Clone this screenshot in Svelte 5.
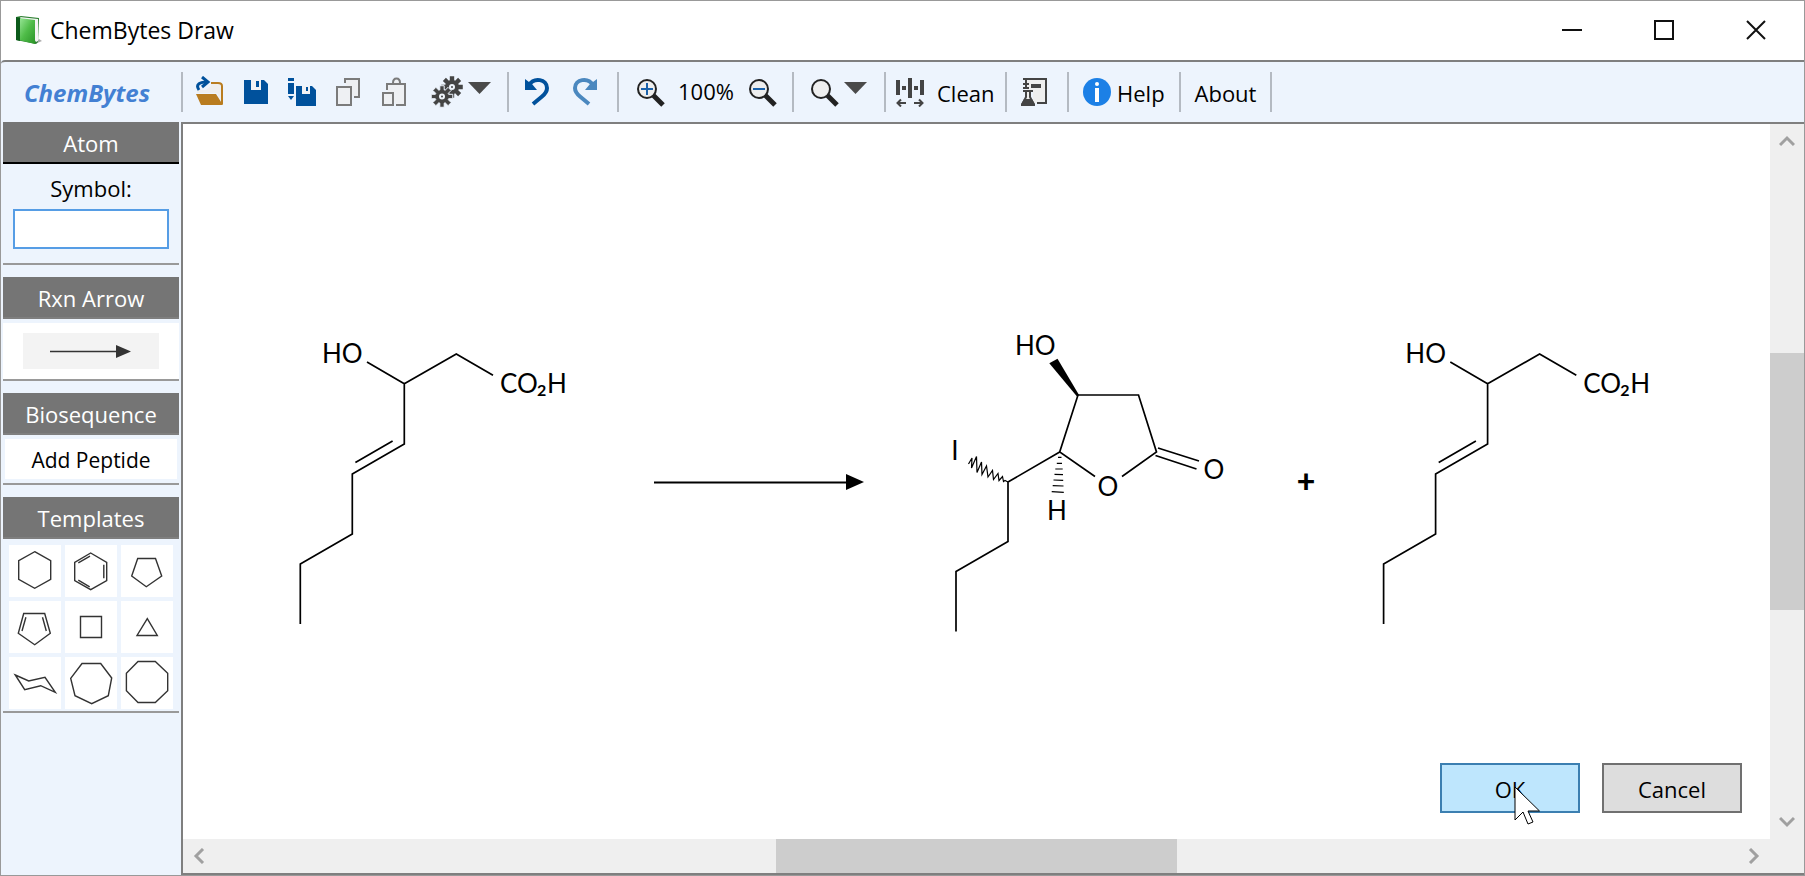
<script>
  let symbol = $state('');

  // Outline of a cog wheel with eight teeth, centred on (cx, cy).
  function cog(cx, cy, outer, inner) {
    const steps = [[-0.32, inner], [-0.2, outer], [0.2, outer], [0.32, inner]];
    const points = [];
    for (let tooth = 0; tooth < 8; tooth++) {
      for (const [offset, radius] of steps) {
        const angle = (tooth * Math.PI) / 4 + offset;
        points.push(`${(cx + radius * Math.cos(angle)).toFixed(2)},${(cy + radius * Math.sin(angle)).toFixed(2)}`);
      }
    }
    return points.join(' ');
  }

  const templates = [
    { name: 'Cyclohexane', d: 'M25.7 6.7 41.7 15.7V34.3L25.7 43.3 9.7 34.3V15.7Z' },
    { name: 'Benzene', d: 'M25.7 8 41.7 17.3V35.7L25.7 44.7 9.7 35.7V17.3ZM13.3 17.8 25 11.2M38.8 19.7V33.3M13.3 35.2 24.7 41.8' },
    { name: 'Cyclopentane', d: 'M16.7 13.5H34.5L40.7 31 25.3 41.7 10.7 31Z' },
    { name: 'Cyclopentadiene', d: 'M14.7 12.5H35.7L41.3 32.3 25.7 43.7 9.3 32.3ZM16.9 16.3 13 30M33.5 16.3 37.3 30' },
    { name: 'Cyclobutane', d: 'M15.5 15.5H36.5V36.5H15.5Z' },
    { name: 'Cyclopropane', d: 'M26.3 17.7 36.3 34.5H16Z' },
    { name: 'Chair', d: 'M6.3 18 19.7 24 36 20.3 46.3 35.3 31.7 28.7 15.7 32.7Z' },
    { name: 'Cycloheptane', d: 'M17 6.5H35.7L46.7 21 43.3 38.7 26.7 46.7 10 38.7 5.7 21.3Z' },
    { name: 'Cyclooctane', d: 'M17 4.5H34.3L46.7 16.3V33.7L34.3 45.5H17L5.4 33.7V16.3Z' }
  ];
</script>

{#snippet caret()}
  <svg width="24" height="32" viewBox="0 0 24 32"><path d="M0 6H23L11.5 18Z" fill="#4a4a4a" /></svg>
{/snippet}

{#snippet lens()}
  <path d="M17.5 17.5 27 27" stroke="#222" stroke-width="5" />
  <circle cx="11" cy="11" r="9" fill="#eee" stroke="#222" stroke-width="2" />
{/snippet}

{#snippet alkene(dx)}
  <g transform="translate({dx} 0)">
    <path class="bond" d="M367 362 404.3 383.7 456.3 354 493 375.3M404.3 383.7V444L352.3 474V534L300.3 564V624M392.6 441 355.4 462.4" />
    <text x="322" y="363">HO</text>
    <text x="500" y="393">CO</text>
    <text class="sub" x="537" y="396">2</text>
    <text x="547" y="393">H</text>
  </g>
{/snippet}

<div class="window">
  <header class="titlebar">
    <svg class="book" width="28" height="30" viewBox="0 0 28 30">
      <defs>
        <linearGradient id="cover" x1="0" y1="0" x2="1" y2="1">
          <stop offset="0" stop-color="#9be89a" />
          <stop offset="0.5" stop-color="#4fbc48" />
          <stop offset="1" stop-color="#2a9428" />
        </linearGradient>
      </defs>
      <path d="M20 28 27 25 24 23Z" fill="#777" opacity="0.6" />
      <path d="M1 1 6 0 24 2 23 26 21 28 1 24Z" fill="#2c8030" />
      <path d="M5 1 23 3V25L21 26Z" fill="#f4f4f4" />
      <path d="M4 2 20 4V28L4 24Z" fill="url(#cover)" />
      <path d="M1 1 5 2V25L1 24Z" fill="#0c5a1b" />
    </svg>
    <h1>ChemBytes Draw</h1>
    <div class="controls">
      <button aria-label="Minimize"><svg width="20" height="20" viewBox="0 0 20 20"><path d="M0 10H20" /></svg></button>
      <button aria-label="Maximize"><svg width="20" height="20" viewBox="0 0 20 20"><path d="M1 1H19V19H1Z" /></svg></button>
      <button aria-label="Close"><svg width="20" height="20" viewBox="0 0 20 20"><path d="M1 1 19 19M19 1 1 19" /></svg></button>
    </div>
  </header>

  <nav class="toolbar">
    <div class="brand">ChemBytes</div>

    <div class="group files">
      <button class="tool" aria-label="Open">
        <svg width="28" height="32" viewBox="0 0 28 32">
          <path d="M1 17V14H10L15 10V7H26V28L21 17Z" fill="#eee" />
          <path d="M15 7H22Q26 7 26 10V28" fill="none" stroke="#b97c1f" stroke-width="2" />
          <path d="M0 18H20L27 29H5Z" fill="#b97c1f" />
          <path d="M3 14C-1 8 4 6 12 6" fill="none" stroke="#00519c" stroke-width="3" />
          <path d="M6 1 12 6 6 11" fill="none" stroke="#00519c" stroke-width="3" />
        </svg>
      </button>
      <button class="tool" aria-label="Save">
        <svg width="24" height="32" viewBox="0 0 24 32">
          <path d="M0 4H20L24 8V28H0Z" fill="#00519c" />
          <path d="M7 4H17V14H7Z" fill="#f2f2f4" /><path d="M12 5H15V11H12Z" fill="#00519c" />
        </svg>
      </button>
      <button class="tool" aria-label="Save as">
        <svg width="28" height="32" viewBox="0 0 28 32">
          <path d="M0 2H6V5H0ZM0 7H6V18H0ZM0 20H6L3 24Z" fill="#00519c" />
          <path d="M8 10H24L28 14V30H8Z" fill="#00519c" />
          <path d="M14 10H22V18H14Z" fill="#f2f2f4" /><path d="M18 11H20V15H18Z" fill="#00519c" />
        </svg>
      </button>
      <button class="tool" aria-label="Copy">
        <svg width="24" height="32" viewBox="0 0 24 32" fill="#eef0f3" stroke="#7b7b7b" stroke-width="2">
          <path d="M9 7V3H23V21H18" /><path d="M1 11H15V29H1Z" />
        </svg>
      </button>
      <button class="tool" aria-label="Paste">
        <svg width="24" height="32" viewBox="0 0 24 32" fill="#eef0f3" stroke="#7b7b7b" stroke-width="2">
          <path d="M5 14V8H23V29H14" /><path d="M11 7C11 1 18 1 18 7" /><path d="M1 17H11V29H1Z" />
        </svg>
      </button>
      <button class="drop" aria-label="Settings">
        <svg width="32" height="32" viewBox="0 0 32 32">
          <polygon points={cog(21, 11, 11, 7)} fill="#444" />
          <circle cx="21" cy="11" r="3" fill="#eef3f9" /><circle cx="21" cy="11" r="1" fill="#444" />
          <polygon points={cog(11, 20.5, 11, 7)} fill="#444" stroke="#edf4fd" stroke-width="1" />
          <circle cx="11" cy="20.5" r="3" fill="#eef3f9" /><circle cx="11" cy="20.5" r="1" fill="#444" />
        </svg>
        {@render caret()}
      </button>
    </div>

    <div class="group history">
      <button class="tool" aria-label="Undo">
        <svg width="26" height="32" viewBox="0 0 26 32">
          <path d="M5 9C10 1 23 3 23 12 23 16 21 18 18 20.5L9 28" fill="none" stroke="#00519c" stroke-width="4" />
          <path d="M1 3 5 6 8 8 13 14H1Z" fill="#00519c" />
        </svg>
      </button>
      <button class="tool" aria-label="Redo">
        <svg width="26" height="32" viewBox="0 0 26 32">
          <path d="M21 9C16 1 3 3 3 12 3 16 5 18 8 20.5L17 28" fill="none" stroke="#4b88bf" stroke-width="4" />
          <path d="M25 3 21 6 18 8 13 14H25Z" fill="#4b88bf" />
        </svg>
      </button>
    </div>

    <div class="group zoom">
      <button class="tool" aria-label="Zoom in">
        <svg width="29" height="29" viewBox="0 0 29 29">
          {@render lens()}
          <path d="M5 11H17M11 5V17" stroke="#1b62ab" stroke-width="2" />
        </svg>
      </button>
      <output>100%</output>
      <button class="tool" aria-label="Zoom out">
        <svg width="29" height="29" viewBox="0 0 29 29">
          {@render lens()}
          <path d="M5 11H17" stroke="#1b62ab" stroke-width="2" />
        </svg>
      </button>
    </div>

    <div class="group">
      <button class="drop search" aria-label="Search">
        <svg width="29" height="29" viewBox="0 0 29 29">{@render lens()}</svg>
        {@render caret()}
      </button>
    </div>

    <div class="group">
      <button class="labelled clean">
        <svg width="28" height="30" viewBox="0 0 28 30" fill="#444">
          <path d="M0 3H4V18H0ZM12 1H16V21H12ZM24 3H28V18H24ZM6 9H10V13H6ZM18 9H22V13H18Z" />
          <path d="M1 26H10M27 26H18M5 22.5 1.5 26 5 29.5M23 22.5 26.5 26 23 29.5" fill="none" stroke="#444" stroke-width="2" />
        </svg>
        <span>Clean</span>
      </button>
    </div>

    <div class="group">
      <button class="tool wide" aria-label="Lab book">
        <svg width="28" height="30" viewBox="0 0 28 30">
          <path d="M6 3H26V26H12V13H6Z" fill="#eee" />
          <path d="M4 2H25V26H16M5 2V12M2 7H8M2 11H8M2 2H8" fill="none" stroke="#444" stroke-width="2" />
          <path d="M10 7H20V11H10Z" fill="#444" />
          <path d="M2 14H12M5 14V20L2 26H12L9 20V14" fill="#eee" stroke="#444" stroke-width="2" />
          <path d="M3 22H11L14 27V29H0V27Z" fill="#444" />
        </svg>
      </button>
    </div>

    <div class="group">
      <button class="labelled help">
        <svg width="28" height="28" viewBox="0 0 28 28">
          <circle cx="14" cy="14" r="14" fill="#1c80e6" />
          <circle cx="14" cy="6" r="2" fill="#fff" /><path d="M12 10H16V24H12Z" fill="#fff" />
        </svg>
        <span>Help</span>
      </button>
    </div>

    <div class="group last"><button class="labelled about"><span>About</span></button></div>
  </nav>

  <div class="body">
    <aside>
      <section>
        <h2 class="active">Atom</h2>
        <div class="symbol">
          <label for="symbol">Symbol:</label>
          <input id="symbol" type="text" bind:value={symbol} />
        </div>
      </section>
      <section>
        <h2>Rxn Arrow</h2>
        <div class="arrow">
          <button aria-label="Reaction arrow">
            <svg width="82" height="14" viewBox="0 0 82 14"><path d="M0 7.5H68" stroke="#333" stroke-width="1.6" /><path d="M66 1 81 7.5 66 14Z" fill="#333" /></svg>
          </button>
        </div>
      </section>
      <section>
        <h2>Biosequence</h2>
        <button class="peptide">Add Peptide</button>
      </section>
      <section>
        <h2>Templates</h2>
        <div class="templates">
          {#each templates as t}
            <button aria-label={t.name}>
              <svg width="52" height="52" viewBox="0 0 52 52"><path d={t.d} /></svg>
            </button>
          {/each}
        </div>
      </section>
    </aside>

    <main>
      <div class="canvas">
        <svg class="scheme" viewBox="183 124 1587 715">
          {@render alkene(0)}
          <path class="arrow-line" d="M654 482.5H848" />
          <path d="M846 474 864 482 846 490Z" />

          <path class="bond" d="M1095 476.5 1059.7 452 1078 395H1138.5L1156.5 452 1122 476.5M1158 448 1199 461M1155.5 455.5 1196.5 469M1059.7 452 1008 482V541.5L956 571.5V631.5" />
          <path d="M1049.3 363.3 1057.5 358.7 1079 395 1077 396.5Z" />
          <path class="thin" d="M1058 457.3H1061.5M1056.8 463.3H1062M1055.3 469H1062.7M1054.5 474.3 1063 474.6M1053.5 480 1063.2 480.4M1052.7 485.6 1063.5 486M1051.7 491.6 1063.8 492.4" />
          <path class="thin" d="M1008 482 1005 480.5 1003.5 481.5 1002.5 476.5 999 480.5 998 473.5 993.5 479.5 992.5 470.5 988 477 986.5 466 982 474.5 981.5 462 977 472.5 976.5 456.5 971.5 468 972 458 968.5 464" />
          <text x="1015" y="355">HO</text>
          <text x="955" y="460" text-anchor="middle">I</text>
          <text x="1108" y="496" text-anchor="middle">O</text>
          <text x="1214" y="479" text-anchor="middle">O</text>
          <text x="1057" y="520" text-anchor="middle">H</text>

          <text class="plus" x="1306" y="493" text-anchor="middle">+</text>
          {@render alkene(1083.3)}
        </svg>
        <div class="actions">
          <button class="ok">
            OK
            <svg class="cursor" width="28" height="40" viewBox="0 0 28 40">
              <path d="M1 1V34L9 26 14 38 19 36 14 25H25.5Z" fill="#fff" stroke="#000" />
            </svg>
          </button>
          <button>Cancel</button>
        </div>
      </div>
      <div class="scroll vertical">
        <button aria-label="Scroll up"><svg width="16" height="16" viewBox="0 0 16 16"><path d="M1 12 8 5 15 12" /></svg></button>
        <span></span><i></i><span></span>
        <button aria-label="Scroll down"><svg width="16" height="16" viewBox="0 0 16 16"><path d="M1 4 8 11 15 4" /></svg></button>
      </div>
      <div class="scroll horizontal">
        <button aria-label="Scroll left"><svg width="16" height="16" viewBox="0 0 16 16"><path d="M11 1 4 8 11 15" /></svg></button>
        <span></span><i></i><span></span>
        <button aria-label="Scroll right"><svg width="16" height="16" viewBox="0 0 16 16"><path d="M5 1 12 8 5 15" /></svg></button>
      </div>
    </main>
  </div>
</div>

<style>
  :global(body) { margin: 0; }

  .window {
    display: flex;
    flex-direction: column;
    box-sizing: border-box;
    min-height: 100vh;
    border: 1px solid #999;
    background: #edf4fd;
    color: #000;
    font-family: "Open Sans", "Noto Sans", sans-serif;
    font-size: 22px;
    line-height: 30px;
  }
  svg { display: block; flex: none; }
  button {
    display: flex;
    align-items: center;
    justify-content: center;
    margin: 0;
    padding: 0;
    border: 0;
    background: none;
    color: inherit;
    font: inherit;
  }
  h1, h2 { margin: 0; font-size: 22px; font-weight: 400; }

  .titlebar { display: flex; align-items: center; height: 59px; background: #fff; }
  .book { margin-left: 14px; }
  h1 { padding: 0 0 2px 7px; font-size: 23px; }
  .controls { display: flex; margin-left: auto; padding: 0 2px 2px 0; }
  .controls button { width: 92px; height: 56px; }
  .controls path { fill: none; stroke: #111; stroke-width: 2; }

  .toolbar {
    display: flex;
    align-items: center;
    height: 60px;
    border-top: 2px solid #7f7f7f;
    border-top-left-radius: 4px;
  }
  .brand {
    width: 180px;
    padding: 2px 8px 0 0;
    box-sizing: border-box;
    text-align: center;
    color: #4380d3;
    font-size: 24px;
    font-weight: 700;
    font-style: italic;
  }
  .group { display: flex; align-items: center; height: 40px; border-left: 2px solid #b4bac2; }
  .last { border-right: 2px solid #b4bac2; }
  .tool { width: 46px; height: 40px; }
  .files { padding-left: 4px; }
  .drop { gap: 5px; padding: 0 15px 0 14px; }
  .search { padding: 0 16px; }
  .history { padding: 0 8px 0 4px; }
  .history .tool { width: 48px; }
  .zoom { padding: 0 7px 0 8px; }
  output { width: 66px; padding-bottom: 2px; text-align: center; }
  .wide { width: 60px; padding-right: 4px; }
  .labelled { box-sizing: border-box; justify-content: flex-start; height: 40px; white-space: nowrap; }
  .labelled span { padding-top: 2px; }
  .clean { width: 119px; gap: 13px; padding-left: 10px; }
  .help { width: 110px; gap: 6px; padding-left: 14px; }
  .about { width: 89px; justify-content: center; }

  .body { display: flex; flex: 1; }
  aside { width: 176px; flex: none; padding: 0 2px; }
  section { margin-bottom: 12px; border-bottom: 2px solid #999; }
  h2 {
    height: 40px;
    border-bottom: 2px solid #7f7f7f;
    background: #757575;
    color: #fff;
    line-height: 42px;
    text-align: center;
  }
  .active { border-color: #000; }
  .symbol { display: flex; flex-direction: column; align-items: center; padding: 9px 10px 14px; gap: 6px; }
  input {
    box-sizing: border-box;
    width: 100%;
    height: 40px;
    padding: 0 6px;
    border: 2px solid #569de5;
    background: #fff;
    font: inherit;
    outline: 0;
  }
  .arrow { margin-top: 4px; padding: 10px 20px; background: #fff; }
  .arrow button { width: 100%; height: 36px; background: #f3f3f3; }
  .peptide { box-sizing: border-box; width: 172px; height: 40px; margin: 4px 2px; padding-top: 2px; background: #fff; font-size: 21px; }
  .templates { display: grid; grid-template-columns: repeat(3, 52px); gap: 4px; padding: 6px 6px 2px; }
  .templates button { background: #fff; }
  .templates path { fill: none; stroke: #333; stroke-width: 1.4; }

  main {
    display: grid;
    flex: 1;
    min-width: 0;
    grid-template-columns: 1fr 34px;
    grid-template-rows: 1fr 34px;
    border: 2px solid #7f7f7f;
    border-right: 0;
    background: #efefef;
  }
  .canvas { display: grid; background: #fff; }
  .canvas > * { grid-area: 1 / 1; }
  .scheme { width: 100%; height: 100%; font-family: Lato, sans-serif; font-size: 26px; }
  .bond { fill: none; stroke: #000; stroke-width: 1.7; }
  .arrow-line { stroke: #000; stroke-width: 2; }
  .thin { fill: none; stroke: #000; stroke-width: 1.2; }
  .sub { font-size: 16px; font-weight: 700; }
  .plus { font-size: 32px; font-weight: 900; }

  .actions { display: flex; align-self: end; justify-self: end; gap: 22px; padding: 0 28px 26px 0; }
  .actions button {
    position: relative;
    box-sizing: border-box;
    width: 140px;
    height: 50px;
    padding-top: 2px;
    border: 2px solid #707070;
    background: #ddd;
  }
  .actions .ok { border-color: #3c7fb1; background: #bee6fd; }
  .cursor { position: absolute; left: 72px; top: 21px; z-index: 1; }

  .scroll { display: flex; }
  .vertical { flex-direction: column; }
  .scroll button { flex: none; width: 34px; height: 34px; }
  .scroll path { fill: none; stroke: #a0a0a0; stroke-width: 3; }
  .scroll span { flex: 194; }
  .scroll i { flex: 257; background: #cdcdcd; }
  .horizontal span { flex: 559; }
  .horizontal i { flex: 402; }
</style>
